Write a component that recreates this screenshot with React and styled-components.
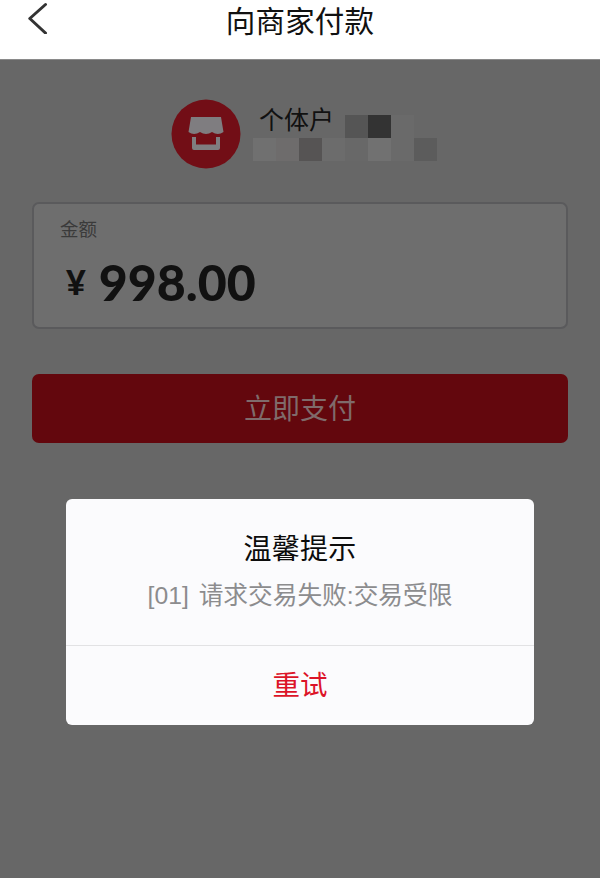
import React from "react";
import styled, { createGlobalStyle } from "styled-components";

const Global = createGlobalStyle`
  html, body { margin: 0; padding: 0; }
  body { width: 600px; height: 878px; overflow: hidden; background: #676767; font-family: "Noto Sans CJK SC", "Liberation Sans", sans-serif; }
  * { box-sizing: border-box; }
`;
const Page = styled.div`
  position: relative; width: 600px; height: 878px; background: #676767;
  display: flex; flex-direction: column;
`;
const Header = styled.header`
  height: 60px; flex: none; background: #fff; border-bottom: 1px solid #8a8a8a;
  position: relative; display: flex; justify-content: center;
`;
const Title = styled.h1`
  margin: 0; font-size: 29.5px; line-height: 38px; font-weight: 400; color: #111; letter-spacing: 0.2px;
`;
const Back = styled.svg`
  position: absolute; left: 27px; top: 2px; width: 21px; height: 32px;
`;
const Content = styled.main`
  display: flex; flex-direction: column; padding: 39px 32px 0;
`;
const Merchant = styled.section`
  display: flex; height: 70px; padding-left: 139px; gap: 12px;
`;
const Avatar = styled.svg`
  width: 70px; height: 70px; flex: none;
`;
const MerchantInfo = styled.div`
  display: flex; flex-direction: column; padding-top: 16px;
`;
const NameRow = styled.div`
  display: flex; height: 23px;
`;
const MerchantName = styled.span`
  width: 92px; padding-left: 6px; margin-top: -14px;
  font-size: 25px; line-height: 34px; color: #111; white-space: nowrap;
`;
const Mosaic = styled.div`
  display: flex;
`;
const Tile = styled.div`
  width: 23px; height: 23px; background: ${p => p.$c};
`;
const AmountCard = styled.section`
  margin-top: 33px; height: 127px; border: 2px solid #5a5a5c; border-radius: 7px;
  background: #6e6e6e; padding: 12px 0 0 26px;
`;
const AmountLabel = styled.div`
  font-size: 18.5px; line-height: 24px; color: #3a3a3a;
`;
const AmountRow = styled.div`
  display: flex; align-items: baseline; margin-top: 17px; padding-left: 6px; gap: 13px;
`;
const Currency = styled.span`
  font-family: "Lato", sans-serif; font-size: 34px; font-weight: 900; color: #111; line-height: 50px;
  position: relative; top: -6px;
`;
const Amount = styled.span`
  font-family: "Lato", "Liberation Sans", sans-serif; font-size: 50px; font-weight: 900; color: #111; line-height: 50px;
`;
const PayButton = styled.div`
  margin-top: 45px; height: 69px; border-radius: 7px; background: #63070d;
  display: flex; align-items: center; justify-content: center;
  font-size: 28px; color: #7f6b6b; padding-bottom: 3px;
`;
const Dialog = styled.div`
  position: absolute; left: 66px; top: 499px; width: 468px; height: 226px;
  background: #fbfbfd; border-radius: 6px; display: flex; flex-direction: column;
`;
const DialogBody = styled.div`
  height: 147px; flex: none; border-bottom: 1px solid #e2e2e4;
  display: flex; flex-direction: column; align-items: center; padding-top: 29px;
`;
const DialogTitle = styled.div`
  font-size: 28px; line-height: 38px; color: #0c0c0c; letter-spacing: 0.2px;
`;
const DialogText = styled.div`
  font-family: "Liberation Sans", "Noto Sans CJK SC", sans-serif;
  font-size: 24.7px; line-height: 34px; color: #8c8c8e; margin-top: 13px; white-space: nowrap; word-spacing: 3px;
`;
const DialogAction = styled.div`
  flex: 1; display: flex; align-items: center; justify-content: center;
  font-size: 27.5px; color: #dc1428; padding-bottom: 5px;
`;

const row1 = ["#555555", "#333333", "#6a6a6a"];
const row2 = ["#707070", "#6e6c6c", "#565454", "#6c6c6c", "#686868", "#717171", "#6a6a6a", "#5c5c5c"];

export default function App() {
  return (
    <Page>
      <Global />
      <Header>
        <Back viewBox="0 0 21 32">
          <path d="M18.5 2.5 L2.8 16.5 L18.5 31" fill="none" stroke="#333" strokeWidth="3" strokeLinecap="round" strokeLinejoin="round" />
        </Back>
        <Title>向商家付款</Title>
      </Header>
      <Content>
        <Merchant>
          <Avatar viewBox="0 0 70 70">
            <circle cx="35" cy="35" r="34.5" fill="#720e16" />
            <path d="M20 18 H50 L52.5 33 Q47 37 41 33 Q35 37 29 33 Q23 37 17.5 33 Z" fill="#7f7d80" />
            <path d="M21 38 H25 V45.5 H45 V38 H49 V49 Q49 51 47 51 H23 Q21 51 21 49 Z" fill="#7f7d80" />
          </Avatar>
          <MerchantInfo>
            <NameRow>
              <MerchantName>个体户</MerchantName>
              <Mosaic>{row1.map((c, i) => <Tile key={i} $c={c} />)}</Mosaic>
            </NameRow>
            <Mosaic>{row2.map((c, i) => <Tile key={i} $c={c} />)}</Mosaic>
          </MerchantInfo>
        </Merchant>
        <AmountCard>
          <AmountLabel>金额</AmountLabel>
          <AmountRow>
            <Currency>¥</Currency>
            <Amount>998.00</Amount>
          </AmountRow>
        </AmountCard>
        <PayButton>立即支付</PayButton>
      </Content>
      <Dialog>
        <DialogBody>
          <DialogTitle>温馨提示</DialogTitle>
          <DialogText>[01] 请求交易失败:交易受限</DialogText>
        </DialogBody>
        <DialogAction>重试</DialogAction>
      </Dialog>
    </Page>
  );
}
